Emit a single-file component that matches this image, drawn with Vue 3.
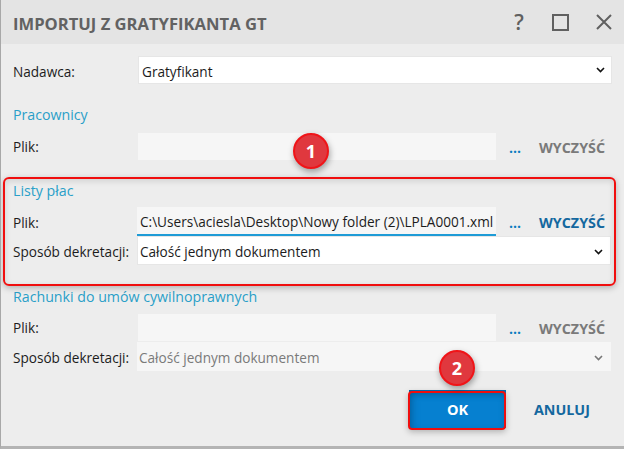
<script setup>
const chevron = 'M1 1 L4.5 4.5 L8 1'
</script>

<template>
  <div class="dialog">
    <header class="titlebar">
      <h1 class="title">IMPORTUJ Z GRATYFIKANTA GT</h1>
      <div class="tools">
        <span class="help">?</span>
        <svg width="17" height="17" viewBox="0 0 17 17"><rect x="1" y="1" width="15" height="15" fill="none" stroke="#606060" stroke-width="2" /></svg>
        <svg width="16" height="16" viewBox="0 0 16 16"><path d="M1 1 L15 15 M15 1 L1 15" fill="none" stroke="#606060" stroke-width="2" /></svg>
      </div>
    </header>

    <main class="body">
      <div class="row first">
        <label>Nadawca:</label>
        <div class="select">
          <span>Gratyfikant</span>
          <svg class="chev" width="9" height="6" viewBox="0 0 9 6"><path :d="chevron" /></svg>
        </div>
      </div>

      <h2 class="section s1">Pracownicy</h2>
      <div class="row file">
        <label>Plik:</label>
        <div class="input disabled"></div>
        <span class="dots">...</span>
        <span class="clear">WYCZYŚĆ</span>
      </div>

      <h2 class="section s2">Listy płac</h2>
      <div class="row">
        <label>Plik:</label>
        <div class="input active">C:\Users\aciesla\Desktop\Nowy folder (2)\LPLA0001.xml</div>
        <span class="dots">...</span>
        <span class="clear on">WYCZYŚĆ</span>
      </div>
      <div class="row tight">
        <label>Sposób dekretacji:</label>
        <div class="select wide">
          <span>Całość jednym dokumentem</span>
          <svg class="chev" width="9" height="6" viewBox="0 0 9 6"><path :d="chevron" /></svg>
        </div>
      </div>

      <h2 class="section s3">Rachunki do umów cywilnoprawnych</h2>
      <div class="row file">
        <label>Plik:</label>
        <div class="input disabled"></div>
        <span class="dots">...</span>
        <span class="clear">WYCZYŚĆ</span>
      </div>
      <div class="row tight">
        <label>Sposób dekretacji:</label>
        <div class="select wide off">
          <span>Całość jednym dokumentem</span>
          <svg class="chev" width="9" height="6" viewBox="0 0 9 6"><path :d="chevron" /></svg>
        </div>
      </div>

      <div class="actions">
        <button class="ok">OK</button>
        <button class="cancel">ANULUJ</button>
      </div>
    </main>

    <div class="frame frame-list"></div>
    <div class="frame frame-ok"></div>
    <div class="badge badge-1">1</div>
    <div class="badge badge-2">2</div>
  </div>
</template>

<style>
html, body { margin: 0; background: #ededed; }
</style>

<style scoped>
.dialog {
  position: relative;
  width: 624px;
  height: 449px;
  box-sizing: border-box;
  overflow: hidden;
  background: #ededed;
  border-left: 1px solid #a8a8a8;
  border-bottom: 3px solid #b4b4b4;
  font-family: "Open Sans", "Noto Sans", sans-serif;
  font-size: 13.6px;
  color: #1c1c1c;
}
.titlebar {
  height: 44px;
  display: flex;
  align-items: center;
  justify-content: space-between;
  padding: 0 12px 0 12px;
  background: #e4e4e4;
}
.title {
  margin: 2px 0 0;
  font-size: 16.6px;
  font-weight: 700;
  color: #626262;
}
.tools {
  display: flex;
  align-items: center;
  gap: 27px;
}
.help {
  width: 12px;
  text-align: center;
  font-size: 21px;
  font-weight: 600;
  line-height: 18px;
  color: #606060;
}
.body {
  padding: 12px 0 0 12px;
}
.row {
  display: flex;
  align-items: center;
  height: 27px;
}
.row.first { height: 28px; }
.row.tight { height: 29px; margin-top: 1px; }
label {
  width: 125px;
  flex: none;
  white-space: nowrap;
  padding-top: 2px;
}
.row.file label { padding-top: 0; }
.select {
  box-sizing: border-box;
  height: 100%;
  width: 474px;
  display: flex;
  align-items: center;
  justify-content: space-between;
  padding: 2px 6px 0 3px;
  background: #fff;
  border: 1px solid #e6e6e6;
  color: #1c1c1c;
}
.select.wide { margin-left: -1px; padding-left: 2px; padding-right: 7px; }
.select.off {
  background: #f6f6f6;
  border-color: #f6f6f6;
  color: #7a7a7a;
  padding-left: 1px;
}
.chev { margin-top: -3px; }
.wide .chev { margin-top: 0; }
.chev path {
  fill: none;
  stroke: #111;
  stroke-width: 1.6;
}
.off .chev path { stroke: #777; }
.input {
  box-sizing: border-box;
  width: 358px;
  height: 100%;
  flex: none;
  padding: 2px 3px 0;
  display: flex;
  align-items: center;
  background: #f6f6f6;
  white-space: nowrap;
  overflow: hidden;
}
.input.active {
  height: 29px;
  margin-left: -1px;
  width: 359px;
  padding-left: 3px;
  border-bottom: 2px solid #1e9bd6;
}
.dots {
  width: 38px;
  text-align: center;
  font-weight: 700;
  font-size: 14px;
  color: #0b7dc0;
  margin-top: 1px;
}
.clear {
  margin-left: 5px;
  font-size: 14.3px;
  font-weight: 700;
  color: #7a7a7a;
  padding-top: 1px;
}
.clear.on { color: #14689f; }
.section {
  margin: 0;
  font-size: 14.2px;
  font-weight: 400;
  line-height: 20px;
  color: #2a9fc8;
}
.s1 { margin-top: 21px; margin-bottom: 8px; }
.s2 { margin-top: 21px; margin-bottom: 7px; }
.s3 { margin-top: 22px; margin-bottom: 7px; }
.actions {
  display: flex;
  align-items: center;
  padding: 19px 0 0 396px;
}
button {
  border: 0;
  font: inherit;
  font-weight: 700;
  background: none;
}
.ok {
  width: 97px;
  height: 38px;
  background: #0680d0;
  color: #fff;
  font-size: 14.5px;
  box-shadow: inset 6px 6px 8px -4px rgba(0, 50, 90, .35);
}
.cancel {
  padding: 0;
  margin-left: 28px;
  color: #14689f;
  font-size: 14.3px;
}
.frame {
  position: absolute;
  box-sizing: border-box;
  border: 2px solid #f00e0e;
  box-shadow: 0 2px 6px rgba(0, 0, 0, .25), inset 0 2px 6px rgba(0, 0, 0, .12);
}
.frame-list {
  left: 2px;
  top: 177px;
  width: 613px;
  height: 109px;
  border-radius: 6px;
}
.frame-ok {
  left: 407px;
  top: 391px;
  width: 98px;
  height: 39px;
  border-radius: 4px;
}
.badge {
  position: absolute;
  box-sizing: border-box;
  width: 36px;
  height: 36px;
  display: flex;
  align-items: center;
  justify-content: center;
  border-radius: 50%;
  background: #e0383e;
  border: 2px solid #f01418;
  box-shadow: 1px 3px 6px rgba(0, 0, 0, .35);
  color: #fff;
  font-size: 18px;
  font-weight: 700;
}
.badge-1 { left: 292px; top: 133px; }
.badge-2 { left: 438px; top: 350px; }
</style>
